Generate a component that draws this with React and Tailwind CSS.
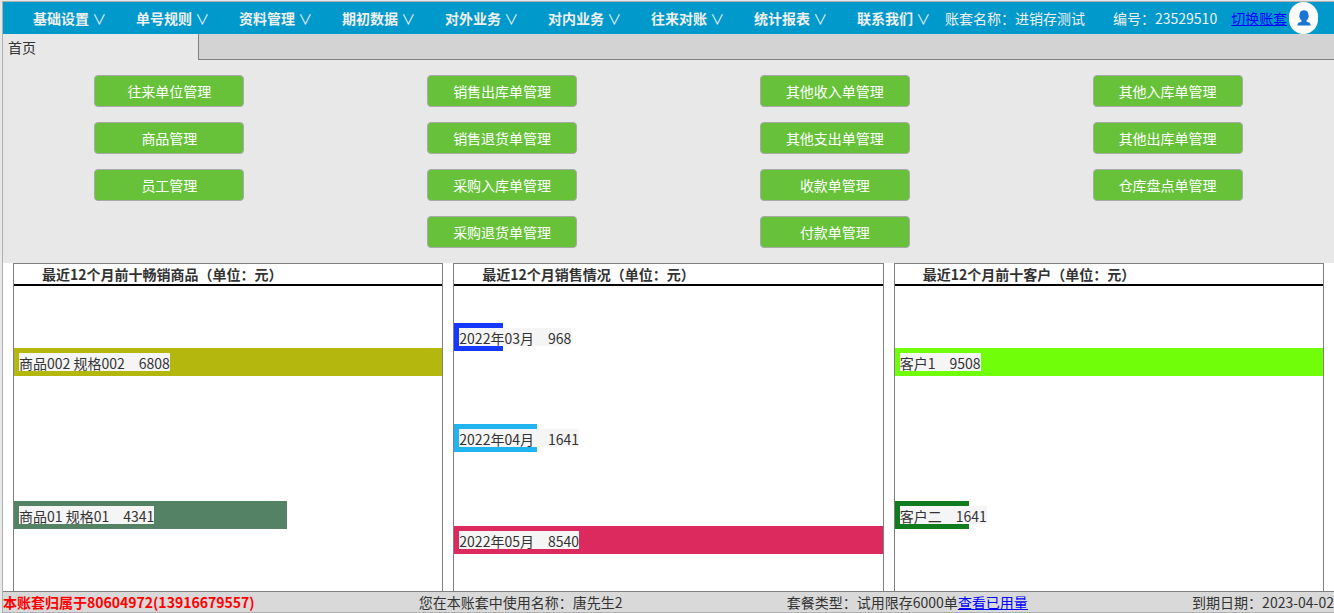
import React from "react";

const menus = ["基础设置", "单号规则", "资料管理", "期初数据", "对外业务", "对内业务", "往来对账", "统计报表", "联系我们"];

const shortcuts = [
  ["往来单位管理", "商品管理", "员工管理"],
  ["销售出库单管理", "销售退货单管理", "采购入库单管理", "采购退货单管理"],
  ["其他收入单管理", "其他支出单管理", "收款单管理", "付款单管理"],
  ["其他入库单管理", "其他出库单管理", "仓库盘点单管理"],
];

const charts = [
  {
    title: "最近12个月前十畅销商品（单位：元）",
    bars: [
      { name: "商品002 规格002", value: 6808, color: "bg-[#b3b70e]" },
      { name: "商品01 规格01", value: 4341, color: "bg-[#548264]" },
    ],
  },
  {
    title: "最近12个月销售情况（单位：元）",
    bars: [
      { name: "2022年03月", value: 968, color: "bg-[#1539ff]" },
      { name: "2022年04月", value: 1641, color: "bg-[#20b4f0]" },
      { name: "2022年05月", value: 8540, color: "bg-[#dc2a5e]" },
    ],
  },
  {
    title: "最近12个月前十客户（单位：元）",
    bars: [
      { name: "客户1", value: 9508, color: "bg-[#70ff08]" },
      { name: "客户二", value: 1641, color: "bg-[#107c1f]" },
    ],
  },
];

function Header() {
  return (
    <header className="flex h-8 shrink-0 items-center bg-[#0099cc] text-[#f0f0f0]">
      <nav className="flex">
        {menus.map((m) => (
          <button key={m} type="button" className="w-[103px] pl-[30px] text-left whitespace-pre">
            <span className="font-bold">{m}</span> ∨
          </button>
        ))}
      </nav>
      <span className="ml-[15px] whitespace-nowrap">账套名称：进销存测试</span>
      <span className="ml-7 whitespace-nowrap">编号：23529510</span>
      <a href="#switch" className="ml-[14px] whitespace-nowrap text-[#0000ff] underline">切换账套</a>
      <button type="button" aria-label="用户" className="ml-[2px] flex h-8 w-[29px] shrink-0 items-center justify-center rounded-full bg-white">
        <svg viewBox="0 0 14 16" className="h-4 w-[14px]" fill="#1976d2">
          <path d="M7 .2C4.200.2 2.500 2 2.500 4.700v.9c-.4.300-.4 1.700.3 2.100.3 1.200.9 2.200 1.700 2.900v1.100C2 12.100.4 12.900.3 15.600h13.400c-.1-2.700-1.700-3.500-4.200-3.900v-1.100c.8-.7 1.400-1.700 1.700-2.900.7-.4.7-1.800.3-2.100v-.9C11.500 2 9.800.2 7 .2z" />
        </svg>
      </button>
    </header>
  );
}

function Chart({ title, bars }) {
  const max = Math.max(...bars.map((b) => b.value));
  return (
    <section className="flex min-w-0 flex-1 flex-col border border-b-0 border-[#808080] bg-white">
      <h2 className="h-[22px] border-b-2 border-black pl-7 leading-5 font-bold">{title}</h2>
      <ul className="flex flex-1 flex-col justify-around">
        {bars.map((b) => (
          <li key={b.name} className={`flex h-7 p-[5px] ${b.color}`} style={{ width: `${(b.value / max) * 100}%` }}>
            <span className="h-[18px] bg-[#f5f5f5] leading-5 whitespace-pre">{b.name + "\u3000" + b.value}</span>
          </li>
        ))}
      </ul>
    </section>
  );
}

export default function App() {
  return (
    <div className="flex min-h-screen flex-col bg-[#e8e8e8] pl-[2px] font-['Noto_Sans_CJK_SC',sans-serif] text-[14px] leading-5 text-[#333333]">
      <div className="mt-px flex flex-1 flex-col border-y border-l border-[#b0b0b0]">
        <Header />
        <div className="flex h-[26px] shrink-0">
          <button type="button" className="w-[195px] pl-[5px] text-left">首页</button>
          <div className="flex-1 border-b border-l border-[#808080] bg-[#d3d3d3]" />
        </div>
        <div className="grid grid-cols-4 py-[15px]">
          {shortcuts.map((col) => (
            <div key={col[0]} className="flex flex-col items-center gap-[15px]">
              {col.map((s) => (
                <button key={s} type="button" className="h-8 w-[150px] rounded border border-[#a9a9a9] bg-[#67c23a] text-white">
                  {s}
                </button>
              ))}
            </div>
          ))}
        </div>
        <main className="flex flex-1 gap-[10px] bg-white px-[10px]">
          {charts.map((c) => (
            <Chart key={c.title} {...c} />
          ))}
        </main>
        <footer className="flex h-[21px] shrink-0 justify-between border-t border-[#808080] bg-[#d9d9d9] leading-5 whitespace-nowrap">
          <span className="font-bold text-[#ff0000]">本账套归属于80604972(13916679557)</span>
          <span>您在本账套中使用名称：唐先生2</span>
          <span>
            套餐类型：试用限存6000单
            <a href="#usage" className="text-[#0000ff] underline">查看已用量</a>
          </span>
          <span>到期日期：2023-04-02</span>
        </footer>
      </div>
    </div>
  );
}
